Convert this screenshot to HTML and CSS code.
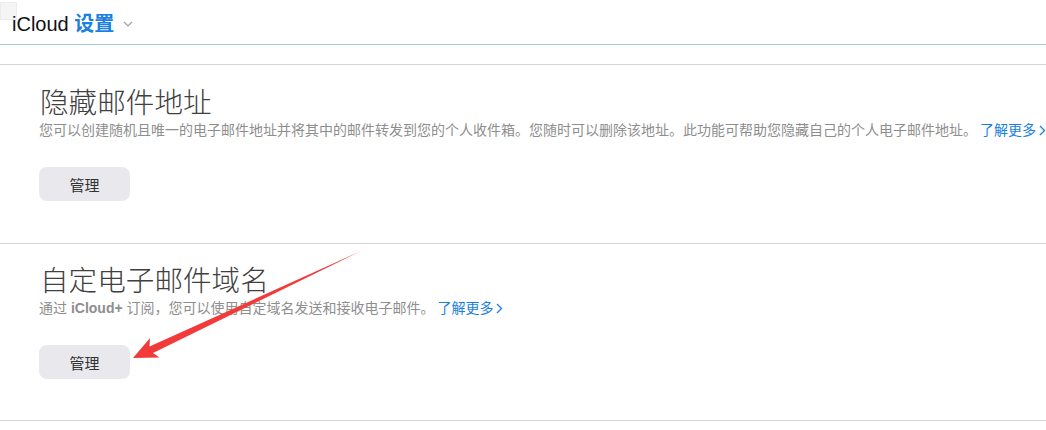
FILE: index.html
```html
<!DOCTYPE html>
<html lang="zh-CN">
<head>
  <meta charset="UTF-8">
  <meta name="viewport" content="width=device-width, initial-scale=1">
  <title>iCloud 设置</title>
  <link rel="stylesheet" href="styles.css">
</head>
<body>

<div class="favicon"></div>

<header class="topbar">
  <span class="brand">iCloud</span>
  <span class="page-name">设置</span>
  <svg class="caret" width="10" height="6" viewBox="0 0 10 6">
    <polyline points="1,1 5,5 9,1" fill="none" stroke="#a0a0a0" stroke-width="1.2"/>
  </svg>
</header>

<main class="settings">
  <!-- 隐藏邮件地址 -->
  <section class="block">
    <h2>隐藏邮件地址</h2>
    <p class="desc">您可以创建随机且唯一的电子邮件地址并将其中的邮件转发到您的个人收件箱。您随时可以删除该地址。此功能可帮助您隐藏自己的个人电子邮件地址。 <a href="#" class="more">了解更多<svg width="7" height="11" viewBox="0 0 7 11"><polyline points="1,1 5.5,5.5 1,10" fill="none" stroke="currentColor" stroke-width="1.3"/></svg></a></p>
    <button class="btn">管理</button>
  </section>

  <!-- 自定电子邮件域名 -->
  <section class="block">
    <h2>自定电子邮件域名</h2>
    <p class="desc">通过 <b>iCloud+</b> 订阅，您可以使用自定域名发送和接收电子邮件。 <a href="#" class="more">了解更多<svg width="7" height="11" viewBox="0 0 7 11"><polyline points="1,1 5.5,5.5 1,10" fill="none" stroke="currentColor" stroke-width="1.3"/></svg></a></p>
    <button class="btn">管理</button>
  </section>
</main>

<!-- annotation arrow -->
<svg class="markup" width="1046" height="430" viewBox="0 0 1046 430">
  <polygon points="361,251 153,353 159.5,357.5 133,358 150,338 149.5,346.5" fill="#f23a3a"/>
</svg>

</body>
</html>
```

FILE: styles.css
```css
* { box-sizing: border-box; }
body {
  margin: 0;
  font-family: "Liberation Sans", "Noto Sans CJK SC", sans-serif;
  background: #fff;
  color: #333;
}

.favicon {
  position: absolute;
  top: 2px;
  left: 0;
  width: 17px;
  height: 18px;
  background: #f5f5f5;
  border: 1px solid #ececec;
}

.topbar {
  position: relative;
  height: 45px;
  padding: 11px 0 0 12px;
  line-height: 24px;
  font-size: 20px;
  border-bottom: 1px solid #a7cae4;
  color: #111;
}

.page-name {
  color: #1a7fe0;
  font-weight: bold;
  font-family: "Noto Sans CJK SC", sans-serif;
  font-size: 20px;
}

.caret {
  margin-left: 3px;
  vertical-align: 4px;
}

.settings {
  margin-top: 19px;
}

.block {
  border-top: 1px solid #d4d4d4;
  padding: 18px 0 42px 40px;
}
.block:last-child {
  border-bottom: 1px solid #d4d4d4;
  padding-top: 17px;
  padding-bottom: 41px;
}

.block h2 {
  margin: 0;
  font-family: "Noto Sans CJK SC Light", "Noto Sans CJK SC DemiLight", "Noto Sans CJK SC", sans-serif;
  font-weight: 300;
  font-size: 28.6px;
  line-height: 36px;
  color: #404040;
}

.desc {
  margin: 1px 0 27px -1px;
  font-size: 14px;
  line-height: 20px;
  color: #8e8e8e;
  white-space: nowrap;
}
.desc b {
  color: #8e8e8e;
}

.more {
  margin-left: -1px;
  color: #1a7fe0;
  text-decoration: none;
}
.more svg {
  margin-left: 3px;
  vertical-align: -1px;
}

.btn {
  display: block;
  width: 91px;
  height: 34px;
  margin-left: -1px;
  border: none;
  border-radius: 8px;
  background: #e8e8ed;
  color: #333;
  font-family: "Noto Sans CJK SC", sans-serif;
  font-size: 15px;
  cursor: pointer;
}

.markup {
  position: absolute;
  top: 0;
  left: 0;
  pointer-events: none;
}
```
